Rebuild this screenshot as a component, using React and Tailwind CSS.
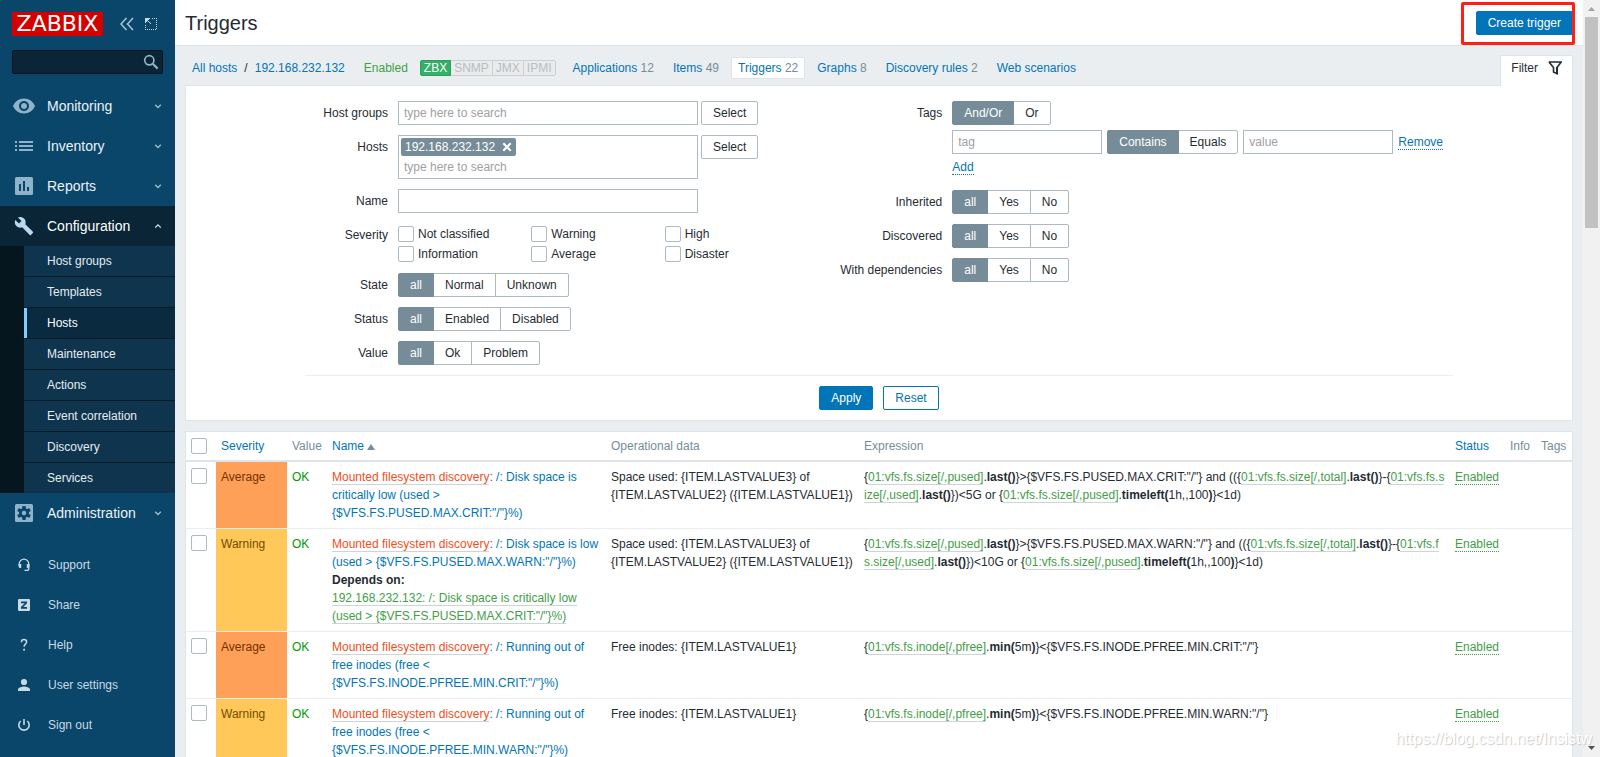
import React from "react";

const link = "text-[#0275b8]";
const underlined = "border-b border-[#ccd5d9] text-[#429e47]";

/* ---------- icons ---------- */

const EyeIcon = () => (
  <svg width="24" height="24" viewBox="0 0 24 24" fill="currentColor">
    <path d="M12 4.500C7 4.500 2.730 7.610 1 12c1.730 4.390 6 7.500 11 7.500s9.270-3.110 11-7.500c-1.730-4.390-6-7.500-11-7.500zM12 17c-2.760 0-5-2.240-5-5s2.240-5 5-5 5 2.240 5 5-2.240 5-5 5zm0-8c-1.660 0-3 1.340-3 3s1.340 3 3 3 3-1.340 3-3-1.340-3-3-3z" />
  </svg>
);

const ListIcon = () => (
  <svg width="24" height="24" viewBox="0 0 24 24" fill="currentColor">
    <path d="M3 7h2v2H3zM7 7h14v2H7zM3 11h2v2H3zM7 11h14v2H7zM3 15h2v2H3zM7 15h14v2H7z" />
  </svg>
);

const ReportsIcon = () => (
  <svg width="24" height="24" viewBox="0 0 24 24" fill="currentColor" fillRule="evenodd">
    <path d="M4.500 3h15A1.500 1.500 0 0 1 21 4.500v15a1.500 1.500 0 0 1-1.500 1.500h-15A1.500 1.500 0 0 1 3 19.500v-15A1.500 1.500 0 0 1 4.500 3zM7 10v7h2v-7zM11 7v10h2V7zM15 13v4h2v-4z" />
  </svg>
);

const WrenchIcon = () => (
  <svg width="20" height="20" viewBox="0 0 24 24" fill="currentColor">
    <path d="M22.700 19l-9.100-9.100c.9-2.300.4-5-1.500-6.900-2-2-5-2.400-7.400-1.300L9 6 6 9 1.600 4.700C.4 7.100.9 10.100 2.900 12.100c1.900 1.900 4.600 2.400 6.900 1.500l9.100 9.100c.4.4 1 .4 1.400 0l2.300-2.300c.5-.4.5-1.100.1-1.400z" />
  </svg>
);

const GearIcon = () => (
  <svg width="24" height="24" viewBox="0 0 24 24">
    <rect x="3" y="3" width="18" height="18" rx="1.500" fill="currentColor" />
    <g fill="#0a466a">
      <rect x="10.300" y="5" width="3.400" height="14" rx="0.600" />
      <rect x="10.300" y="5" width="3.400" height="14" rx="0.600" transform="rotate(60 12 12)" />
      <rect x="10.300" y="5" width="3.400" height="14" rx="0.600" transform="rotate(120 12 12)" />
      <circle cx="12" cy="12" r="5" />
    </g>
    <circle cx="12" cy="12" r="2.200" fill="currentColor" />
  </svg>
);

const SupportIcon = () => (
  <svg width="14" height="14" viewBox="0 0 14 14" fill="none" stroke="currentColor">
    <path d="M2.200 7.500V6a4.800 4.800 0 0 1 9.600 0v4.500c0 1.200-.8 1.900-2 1.900H7.500" strokeWidth="1.300" />
    <path d="M1.600 6h2.600v4H3a1.400 1.400 0 0 1-1.400-1.400zM12.400 6H9.800v4H11a1.400 1.400 0 0 0 1.400-1.400z" fill="currentColor" stroke="none" />
  </svg>
);

const ShareIcon = () => (
  <svg width="14" height="14" viewBox="0 0 14 14">
    <rect x="1" y="1" width="12" height="12" rx="1" fill="currentColor" />
    <path d="M4 3.500h6v1.700L6.300 9H10v1.700H4V9l3.700-3.800H4z" fill="#0a466a" />
  </svg>
);

const HelpIcon = () => (
  <svg width="14" height="14" viewBox="0 0 14 14">
    <path d="M4.400 4.200C4.400 2.400 5.500 1.500 7 1.500s2.600.9 2.600 2.400c0 2-2.500 2.300-2.500 4.800" fill="none" stroke="currentColor" strokeWidth="1.500" />
    <rect x="6.200" y="10.800" width="1.800" height="1.800" fill="currentColor" />
  </svg>
);

const UserIcon = () => (
  <svg width="14" height="14" viewBox="0 0 14 14" fill="currentColor">
    <circle cx="7" cy="4" r="3.100" />
    <path d="M1 13v-1.600C1 9.400 5 8.400 7 8.400s6 1 6 3V13z" />
  </svg>
);

const PowerIcon = () => (
  <svg width="14" height="14" viewBox="0 0 14 14" fill="none" stroke="currentColor" strokeWidth="1.600">
    <path d="M7 1v6M3.600 3a5.200 5.200 0 1 0 6.800 0" />
  </svg>
);

const Chevron = ({ up }) => (
  <svg width="8" height="6" viewBox="0 0 8 6" fill="none" stroke="currentColor" strokeWidth="1.300">
    <path d={up ? "M1.200 4.600L4 1.800l2.800 2.800" : "M1.200 1.700L4 4.500l2.800-2.800"} />
  </svg>
);

/* ---------- sidebar ---------- */

const MenuItem = ({ icon, label, active }) => (
  <a
    href="#"
    className={
      "flex h-10 items-center pr-[13px] text-sm " +
      (active ? "bg-[#0a2536] text-white" : "text-[#ebf2f6]")
    }
  >
    <span className={"flex w-[47px] justify-center " + (active ? "text-[#b9d9ee]" : "text-[#8fb3ca]")}>{icon}</span>
    <span className="flex-1">{label}</span>
    <span className={active ? "text-[#d5e5ef]" : "text-[#9dbdd0]"}>
      <Chevron up={active} />
    </span>
  </a>
);

const subItems = ["Host groups", "Templates", "Hosts", "Maintenance", "Actions", "Event correlation", "Discovery", "Services"];

const userItems = [
  ["Support", <SupportIcon />],
  ["Share", <ShareIcon />],
  ["Help", <HelpIcon />],
  ["User settings", <UserIcon />],
  ["Sign out", <PowerIcon />],
];

const Sidebar = () => (
  <aside className="w-[175px] shrink-0 overflow-hidden bg-[#0a466a]">
    <div className="flex h-12 items-center pl-3">
      <a
        href="#"
        className="flex h-6 w-[91px] items-center justify-center bg-[#d40000] font-['DejaVu_Sans',sans-serif] text-[22px] leading-6 text-white"
      >
        ZABBIX
      </a>
      <button type="button" aria-label="Compact menu" className="ml-[17px] text-[#a9c6d8]">
        <svg width="14" height="14" viewBox="0 0 14 14" fill="none" stroke="currentColor" strokeWidth="1.500">
          <path d="M6.500 1L1 7l5.500 6M13 1L7.500 7l5.500 6" />
        </svg>
      </button>
      <button type="button" aria-label="Hide menu" className="ml-[11px] text-[#c4d8e4]">
        <svg width="12" height="12" viewBox="0 0 12 12" fill="currentColor" shapeRendering="crispEdges">
          <path d="M7 0h1v1H7zM9 0h1v1H9zM11 0h1v1h-1zM11 2h1v1h-1zM11 4h1v1h-1zM11 6h1v1h-1zM11 8h1v1h-1zM11 10h1v1h-1zM0 7h1v1H0zM0 9h1v1H0zM0 11h1v1H0zM2 11h1v1H2zM4 11h1v1H4zM6 11h1v1H6zM8 11h1v1H8zM10 11h1v1h-1z" />
          <path d="M0 0h5v1H4v1H3v1h1v1h1v1h1v1H5V5H4V4H3V3H2v1H1v1H0z" />
          <path d="M1 1h2v2H1z" />
        </svg>
      </button>
    </div>
    <form className="relative mx-3 mt-[2px] mb-3">
      <input
        type="text"
        aria-label="Search"
        className="block h-6 w-full rounded-xs border border-[#04131b] bg-[#0a2536] px-2 text-white outline-none"
      />
      <button type="button" aria-label="Find" className="absolute top-1 right-1 text-[#8fb3ca]">
        <svg width="16" height="16" viewBox="0 0 16 16" fill="none" stroke="currentColor">
          <circle cx="6.300" cy="6.300" r="4.600" strokeWidth="1.700" />
          <path d="M9.800 9.800l4.800 4.800" strokeWidth="2.200" />
        </svg>
      </button>
    </form>
    <nav>
      <MenuItem icon={<EyeIcon />} label="Monitoring" />
      <MenuItem icon={<ListIcon />} label="Inventory" />
      <MenuItem icon={<ReportsIcon />} label="Reports" />
      <MenuItem icon={<WrenchIcon />} label="Configuration" active />
      <ul className="divide-y divide-[#061b28] border-l-[24px] border-[#05161f]">
        {subItems.map((s) => (
          <li key={s}>
            <a
              href="#"
              className={
                "flex h-[30px] items-center border-l-[3px] pl-5 " +
                (s === "Hosts" ? "border-[#83ccff] bg-[#0a2a3f] text-white" : "border-[#0f344d] bg-[#0f344d] text-[#e3edf2]")
              }
            >
              {s}
            </a>
          </li>
        ))}
      </ul>
      <MenuItem icon={<GearIcon />} label="Administration" />
    </nav>
    <nav className="mt-3">
      {userItems.map(([label, icon]) => (
        <a key={label} href="#" className="flex h-10 items-center text-[#c8dae4]">
          <span className="flex w-12 justify-center">{icon}</span>
          {label}
        </a>
      ))}
    </nav>
  </aside>
);

/* ---------- filter ---------- */

const buttonBase = "h-6 rounded-xs border px-[11px]";

const Tab = ({ label, count, active }) => (
  <li
    className={
      "flex h-[22px] items-center rounded-xs border px-1.5 " +
      (active ? "border-[#dfe4e7] bg-white" : "border-transparent")
    }
  >
    <a href="#" className={link}>{label}</a>
    {count && <span className="text-[#768d99]">&nbsp;{count}</span>}
  </li>
);

const Segmented = ({ name, options }) => (
  <div className="flex" role="radiogroup" aria-label={name}>
    {options.map((o, i) => (
      <label
        key={o}
        className={
          "relative flex h-6 items-center border px-[11px] first:rounded-l-xs last:rounded-r-xs " +
          (i === 0 ? "z-10 border-[#768d99] bg-[#768d99] text-white" : "-ml-px border-[#acbbc2] bg-white")
        }
      >
        <input type="radio" name={name} defaultChecked={i === 0} className="sr-only" />
        {o}
      </label>
    ))}
  </div>
);

const Row = ({ label, htmlFor, children }) => (
  <div className="flex gap-2.5">
    <label htmlFor={htmlFor} className="w-[83px] shrink-0 text-right leading-6 group-data-[side=right]:w-[120px]">
      {label}
    </label>
    <div>{children}</div>
  </div>
);

const Checkbox = (props) => (
  <input
    type="checkbox"
    className="block h-4 w-4 shrink-0 appearance-none rounded-xs border border-[#acbbc2] bg-white"
    {...props}
  />
);

const field = "h-6 border border-[#acbbc2] bg-white px-[5px] outline-none placeholder:text-[#a0a0a0]";

const Filter = () => (
  <form className="border border-[#dfe4e7] bg-white px-2.5 pt-[15px] pb-2.5">
    <div className="mx-auto max-w-[1148px]">
      <div className="flex items-start justify-between">
        <div className="group flex flex-col gap-2.5" data-side="left">
          <Row label="Host groups" htmlFor="groups">
            <div className="flex gap-[3px]">
              <input id="groups" placeholder="type here to search" className={field + " w-[300px]"} />
              <button type="button" className={buttonBase + " border-[#acbbc2]"}>Select</button>
            </div>
          </Row>
          <Row label="Hosts" htmlFor="hosts">
            <div className="flex items-start gap-[3px]">
              <div className="h-11 w-[300px] border border-[#acbbc2] bg-white p-[2px]">
                <span className="flex h-[18px] w-fit items-center gap-[7px] rounded-xs bg-[#768d99] px-1 text-white">
                  192.168.232.132
                  <button type="button" aria-label="Remove 192.168.232.132">
                    <svg width="10" height="10" viewBox="0 0 10 10" stroke="currentColor" strokeWidth="2.200">
                      <path d="M1.300 1.300l7.400 7.400M8.700 1.300L1.300 8.700" />
                    </svg>
                  </button>
                </span>
                <input
                  id="hosts"
                  placeholder="type here to search"
                  className="block h-[22px] w-full px-[3px] outline-none placeholder:text-[#a0a0a0]"
                />
              </div>
              <button type="button" className={buttonBase + " border-[#acbbc2]"}>Select</button>
            </div>
          </Row>
          <Row label="Name" htmlFor="name">
            <input id="name" className={field + " w-[300px]"} />
          </Row>
          <Row label="Severity">
            <div className="grid w-[400px] grid-cols-3 gap-y-1 pt-[3px] pb-px">
              {["Not classified", "Warning", "High", "Information", "Average", "Disaster"].map((s) => (
                <label key={s} className="flex h-4 items-center gap-1">
                  <Checkbox />
                  {s}
                </label>
              ))}
            </div>
          </Row>
          <Row label="State">
            <Segmented name="State" options={["all", "Normal", "Unknown"]} />
          </Row>
          <Row label="Status">
            <Segmented name="Status" options={["all", "Enabled", "Disabled"]} />
          </Row>
          <Row label="Value">
            <Segmented name="Value" options={["all", "Ok", "Problem"]} />
          </Row>
        </div>
        <div className="group flex flex-col gap-2.5 pr-2.5" data-side="right">
          <Row label="Tags">
            <div className="flex flex-col items-start gap-[5px]">
              <Segmented name="Tags" options={["And/Or", "Or"]} />
              <div className="flex items-center gap-[5px]">
                <input aria-label="tag" placeholder="tag" className={field + " w-[150px]"} />
                <Segmented name="Operator" options={["Contains", "Equals"]} />
                <input aria-label="value" placeholder="value" className={field + " w-[150px]"} />
                <button type="button" className={"h-4 border-b border-dotted border-[#0275b8] leading-4 " + link}>Remove</button>
              </div>
              <button type="button" className={"mb-[5px] h-4 border-b border-dotted border-[#0275b8] leading-4 " + link}>Add</button>
            </div>
          </Row>
          <Row label="Inherited">
            <Segmented name="Inherited" options={["all", "Yes", "No"]} />
          </Row>
          <Row label="Discovered">
            <Segmented name="Discovered" options={["all", "Yes", "No"]} />
          </Row>
          <Row label="With dependencies">
            <Segmented name="With dependencies" options={["all", "Yes", "No"]} />
          </Row>
        </div>
      </div>
      <div className="mt-2.5 flex justify-center gap-2.5 border-t border-[#ebeef0] pt-2.5">
        <button type="button" className={buttonBase + " border-[#0275b8] bg-[#0275b8] text-white"}>Apply</button>
        <button type="button" className={buttonBase + " border-[#0275b8] bg-white text-[#0275b8]"}>Reset</button>
      </div>
    </div>
  </form>
);

/* ---------- trigger table ---------- */

const Key = ({ children }) => <a href="#" className={underlined}>{children}</a>;

const sizeExpression = (level, free) => (
  <>
    {"{"}<Key>01:vfs.fs.size[/,pused]</Key>.<b>last()</b>{"}>{$VFS.FS.PUSED.MAX." + level + ':"/"} and (({'}
    <Key>01:vfs.fs.size[/,total]</Key>.<b>last()</b>{"}-{"}
    <Key>01:vfs.fs.size[/,used]</Key>.<b>last()</b>{"})<" + free + " or {"}
    <Key>01:vfs.fs.size[/,pused]</Key>.<b>timeleft(</b>1h,,100<b>)</b>{"}<1d)"}
  </>
);

const inodeExpression = (level) => (
  <>
    {"{"}<Key>01:vfs.fs.inode[/,pfree]</Key>.<b>min(</b>5m<b>)</b>{"}<{$VFS.FS.INODE.PFREE.MIN." + level + ':"/"}'}
  </>
);

const sizeData = "Space used: {ITEM.LASTVALUE3} of {ITEM.LASTVALUE2} ({ITEM.LASTVALUE1})";
const inodeData = "Free inodes: {ITEM.LASTVALUE1}";

const triggers = [
  {
    severity: "Average",
    name: '/: Disk space is critically low (used > {$VFS.FS.PUSED.MAX.CRIT:"/"}%)',
    data: sizeData,
    expression: sizeExpression("CRIT", "5G"),
  },
  {
    severity: "Warning",
    name: '/: Disk space is low (used > {$VFS.FS.PUSED.MAX.WARN:"/"}%)',
    depends: '192.168.232.132: /: Disk space is critically low (used > {$VFS.FS.PUSED.MAX.CRIT:"/"}%)',
    data: sizeData,
    expression: sizeExpression("WARN", "10G"),
  },
  {
    severity: "Average",
    name: '/: Running out of free inodes (free < {$VFS.FS.INODE.PFREE.MIN.CRIT:"/"}%)',
    data: inodeData,
    expression: inodeExpression("CRIT"),
  },
  {
    severity: "Warning",
    name: '/: Running out of free inodes (free < {$VFS.FS.INODE.PFREE.MIN.WARN:"/"}%)',
    data: inodeData,
    expression: inodeExpression("WARN"),
  },
];

const severityClass = {
  Average: "bg-[#ffa059] text-[#733100]",
  Warning: "bg-[#ffc859] text-[#734d00]",
};

const TriggerTable = () => (
  <div className="mt-2.5 border border-[#dfe4e7] bg-white">
    <table className="w-full table-fixed border-separate border-spacing-0 text-left leading-[18px] [&_td]:border-b [&_td]:border-[#ebeef0] [&_td]:px-[5px] [&_td]:py-1.5 [&_td]:align-top [&_th]:border-b-2 [&_th]:border-[#dfe4e7] [&_th]:px-[5px] [&_th]:py-[5px] [&_th]:font-normal [&_th]:text-[#768d99]">
      <colgroup>
        <col className="w-[30px]" />
        <col className="w-[71px]" />
        <col className="w-10" />
        <col className="w-[279px]" />
        <col className="w-[253px]" />
        <col />
        <col className="w-[55px]" />
        <col className="w-[31px]" />
        <col className="w-9" />
      </colgroup>
      <thead>
        <tr>
          <th><Checkbox aria-label="Select all" /></th>
          <th><a href="#" className={link}>Severity</a></th>
          <th>Value</th>
          <th>
            <a href="#" className={"flex items-center gap-[3px] " + link}>
              Name
              <svg width="8" height="6" viewBox="0 0 8 6" className="mt-[2px] text-[#768d99]">
                <path d="M4 0l4 6H0z" fill="currentColor" />
              </svg>
            </a>
          </th>
          <th>Operational data</th>
          <th>Expression</th>
          <th><a href="#" className={link}>Status</a></th>
          <th>Info</th>
          <th>Tags</th>
        </tr>
      </thead>
      <tbody>
        {triggers.map((t) => (
          <tr key={t.name}>
            <td><Checkbox aria-label={t.name} /></td>
            <td className={severityClass[t.severity]}>{t.severity}</td>
            <td className="text-[#009900]">OK</td>
            <td className={link}>
              <a href="#" className="border-b border-[#ccd5d9] text-[#f24f1d]">Mounted filesystem discovery</a>
              {": "}
              <a href="#">{t.name}</a>
              {t.depends && (
                <>
                  <br />
                  <b className="text-[#1f2c33]">Depends on:</b>
                  <br />
                  <Key>{t.depends}</Key>
                </>
              )}
            </td>
            <td>{t.data}</td>
            <td className="break-all">{t.expression}</td>
            <td><a href="#" className="border-b border-dotted border-[#429e47] text-[#429e47]">Enabled</a></td>
            <td />
            <td />
          </tr>
        ))}
      </tbody>
    </table>
  </div>
);

/* ---------- page ---------- */

const Header = () => (
  <header className="flex h-[46px] items-center justify-between border-b border-[#dfe4e7] bg-white px-2.5">
    <h1 className="text-xl">Triggers</h1>
    <div className="relative">
      <button type="button" className={buttonBase + " block border-[#0275b8] bg-[#0275b8] text-white"}>Create trigger</button>
      <div className="pointer-events-none absolute -top-[9px] -right-[2px] -bottom-[10px] -left-[15px] rounded-xs border-3 border-[#ff1f14]" />
    </div>
  </header>
);

const Breadcrumbs = () => (
  <div className="flex items-start justify-between pt-[9px]">
    <ul className="flex items-center gap-[5px] pt-[2px]">
      <li className="flex items-center">
        <a href="#" className={"px-[7px] " + link}>All hosts</a>
        <span>/</span>
        <a href="#" className={"px-[7px] " + link}>192.168.232.132</a>
      </li>
      <li className="px-[7px] text-[#429e47]">Enabled</li>
      <li className="mr-[5px] flex leading-[14px] text-[#b4bec4]">
        <span className="z-10 rounded-l-xs border border-[#2f9f5e] bg-[#34af67] px-[3px] text-white">ZBX</span>
        <span className="-ml-px border border-[#c9d1d5] bg-[#ebebeb] px-[3px]">SNMP</span>
        <span className="-ml-px border border-[#c9d1d5] bg-[#ebebeb] px-[3px]">JMX</span>
        <span className="-ml-px rounded-r-xs border border-[#c9d1d5] bg-[#ebebeb] px-[3px]">IPMI</span>
      </li>
      <Tab label="Applications" count="12" />
      <Tab label="Items" count="49" />
      <Tab label="Triggers" count="22" active />
      <Tab label="Graphs" count="8" />
      <Tab label="Discovery rules" count="2" />
      <Tab label="Web scenarios" />
    </ul>
    <a
      href="#"
      className="relative -mb-px flex h-[31px] items-center gap-2.5 border border-b-0 border-[#dfe4e7] bg-white px-2.5 pb-1.5"
    >
      Filter
      <svg width="14" height="14" viewBox="0 0 14 14" fill="none" stroke="currentColor" strokeWidth="1.600">
        <path d="M.8 1h12.400L9 6.500v6.200L5.500 11V6.500L1 1" />
        <path d="M9 6v7" strokeWidth="2" />
      </svg>
    </a>
  </div>
);

const Scrollbar = () => (
  <div className="flex w-[17px] shrink-0 flex-col items-center justify-between bg-[#f1f1f1]">
    <div className="flex w-full flex-col items-center">
      <svg width="17" height="17" viewBox="0 0 17 17"><path d="M5 11l3.500-4 3.500 4z" fill="#a3a3a3" /></svg>
      <div className="h-[211px] w-[13px] bg-[#c1c1c1]" />
    </div>
    <svg width="17" height="17" viewBox="0 0 17 17"><path d="M5 6l3.500 4L12 6z" fill="#505050" /></svg>
  </div>
);

export default function App() {
  return (
    <div className="relative flex h-screen overflow-hidden bg-[#ebeef0] font-['Liberation_Sans',Arial,sans-serif] text-xs text-[#1f2c33]">
      <Sidebar />
      <main className="min-w-0 flex-1 overflow-hidden">
        <Header />
        <div className="px-2.5">
          <Breadcrumbs />
          <Filter />
          <TriggerTable />
        </div>
      </main>
      <Scrollbar />
      <div className="pointer-events-none absolute right-2 bottom-2 text-base leading-5 text-white [text-shadow:1px_1px_1px_#c8c8c8]">
        https://blog.csdn.net/Insistw
      </div>
    </div>
  );
}
